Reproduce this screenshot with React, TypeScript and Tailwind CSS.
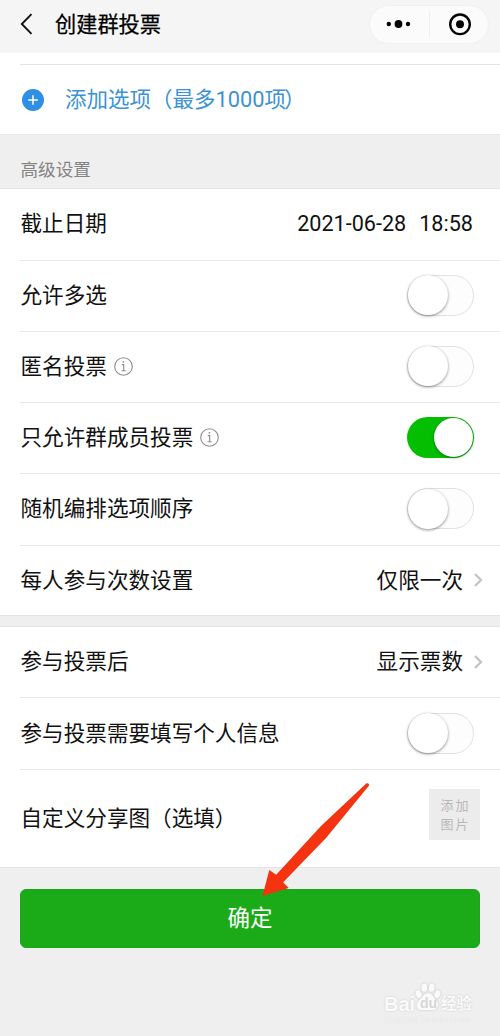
import type { ReactNode } from "react";

function Toggle({ on = false }: { on?: boolean }) {
  return (
    <span
      role="switch"
      aria-checked={on}
      className={
        on
          ? "-mt-px flex h-[41px] w-[67px] items-center justify-end rounded-full bg-[#04be02] p-px"
          : "-mt-px flex h-[41px] w-[67px] items-center justify-start rounded-full border border-[#e1e1e1] bg-[#fdfdfd]"
      }
    >
      <span
        className={
          on
            ? "size-[39px] rounded-full bg-white shadow-[0_1px_3px_rgba(0,0,0,0.4)]"
            : "size-[40px] rounded-full bg-white shadow-[0_1px_3px_rgba(0,0,0,0.45)]"
        }
      />
    </span>
  );
}

function Info() {
  return (
    <svg className="-mt-px ml-[7px] size-[19px]" viewBox="0 0 19 19" fill="none" stroke="#8c8c8c">
      <circle cx="9.5" cy="9.5" r="8.8" strokeWidth="1.1" />
      <path d="M7.8 7.6h1.9v6.1M7.6 13.8h4" strokeWidth="1.1" />
      <circle cx="9.4" cy="4.8" r="0.9" fill="#8c8c8c" stroke="none" />
    </svg>
  );
}

function Chevron() {
  return (
    <svg className="-mt-px ml-[11px] h-[14px] w-[9px]" viewBox="0 0 9 14" fill="none" stroke="#c4c4c4" strokeWidth="2.3">
      <path d="M1 1l6 6-6 6" />
    </svg>
  );
}

function Row({ label, info, children, size }: { label: string; info?: boolean; children: ReactNode; size: string }) {
  return (
    <div className={`ml-5 flex items-center justify-between ${size}`}>
      <div className="flex items-center pl-[0.5px]">
        <span>{label}</span>
        {info && <Info />}
      </div>
      <div className="flex items-center">{children}</div>
    </div>
  );
}

export default function App() {
  return (
    <main className="relative flex h-[1036px] w-[500px] flex-col overflow-hidden bg-[#efefef] font-['Roboto','Noto_Sans_CJK_SC',sans-serif] text-[21.6px] leading-[30px] whitespace-nowrap text-[#111]">
      <header className="flex h-[53px] items-center bg-[#f5f5f5] pr-[11px] pb-[5px] pl-5">
        <svg className="h-[22px] w-[13px]" viewBox="0 0 13 22" fill="none" stroke="#111" strokeWidth="1.9">
          <path d="M11.5 1.2L1.8 11l9.7 9.8" />
        </svg>
        <h1 className="mt-[2px] ml-[22px] text-[21.2px] font-normal text-black [-webkit-text-stroke:0.25px_#000]">创建群投票</h1>
        <div className="ml-auto flex h-[39px] w-[120px] items-center rounded-full border border-[#f0f0f0] bg-[#fbfbfb]">
          <svg className="h-[37px] w-[118px]" viewBox="0 0 118 37">
            <g fill="#050505">
              <circle cx="18.8" cy="18" r="2.2" />
              <circle cx="28.5" cy="18" r="3.9" />
              <circle cx="38" cy="18" r="2.2" />
              <circle cx="90" cy="18.3" r="4" />
            </g>
            <circle cx="90" cy="18.3" r="9.8" fill="none" stroke="#050505" strokeWidth="2.4" />
            <path d="M59.5 5v27" stroke="#efefef" />
          </svg>
        </div>
      </header>

      <section className="flex h-[82px] flex-col border-b border-[#e6e6e6] bg-white pt-[11px]">
        <div className="ml-5 flex flex-1 items-center border-t border-[#e3e3e3] pl-[2px] text-[#3c93d2]">
          <svg className="size-[22px]" viewBox="0 0 22 22">
            <circle cx="11" cy="11" r="11" fill="#2f8fe5" />
            <path d="M6.2 11h9.6M11 6.2v9.6" stroke="white" strokeWidth="1.5" />
          </svg>
          <span className="ml-[21px] text-[21.5px]">
            添加选项（最多<span className="text-[21.8px]">1000</span>项<span className="-ml-[2px]">）</span>
          </span>
        </div>
      </section>

      <h2 className="flex h-[54px] items-center border-b border-[#e4e4e4] pt-[17px] pl-[20.5px] text-[17.6px] text-[#858585]">高级设置</h2>

      <section className="bg-white">
        <Row label="截止日期" size="h-[72px] pb-[2px] border-b border-[#e8e8e8] pr-[27px]">
          <span>2021-06-28</span>
          <span className="ml-[13px]">18:58</span>
        </Row>
        <Row label="允许多选" size="h-[71px] pb-px border-b border-[#e8e8e8] pr-[26px]"><Toggle /></Row>
        <Row label="匿名投票" info size="h-[71px] pb-px border-b border-[#e8e8e8] pr-[26px]"><Toggle /></Row>
        <Row label="只允许群成员投票" info size="h-[71px] border-b border-[#e8e8e8] pr-[26px]"><Toggle on /></Row>
        <Row label="随机编排选项顺序" size="h-[72px] pb-px border-b border-[#e8e8e8] pr-[26px]"><Toggle /></Row>
        <Row label="每人参与次数设置" size="h-[69px] pr-[17px]"><span>仅限一次</span><Chevron /></Row>
      </section>

      <div className="h-[12px] border-y border-[#e4e4e4] bg-[#efefef]" />

      <section className="border-b border-[#e3e3e3] bg-white">
        <Row label="参与投票后" size="h-[71px] border-b border-[#e8e8e8] pr-[17px]"><span>显示票数</span><Chevron /></Row>
        <Row label="参与投票需要填写个人信息" size="h-[72px] border-b border-[#e8e8e8] pr-[26px]"><Toggle /></Row>
        <Row label="自定义分享图（选填）" size="h-[97px] pr-[20px]">
          <span className="mb-[8px] flex size-[51px] items-center justify-center bg-[#ececec] pl-[2px] text-center text-[13px] leading-[19px] tracking-[2px] text-[#b8b8b8]">
            添加<br />图片
          </span>
        </Row>
      </section>

      <button type="button" className="mx-5 mt-[21px] flex h-[59px] items-center justify-center rounded-[6px] border border-[#1da41c] bg-[#1bab19] pb-px text-[22.5px] text-white">确定</button>

      <svg className="absolute top-[780px] left-[260px] h-[120px] w-[115px]" viewBox="0 0 115 120">
        <path d="M106.5 3.3q2.5-.6 2.8 2L66 58 23.2 102.2 28.7 108 2.5 116 9.3 90 16.2 94.7 61 46Z" fill="#f43310" />
      </svg>

      <div className="absolute top-[983px] left-[383px] h-[46px] w-[93px] font-['Liberation_Sans','Noto_Sans_CJK_SC',sans-serif] text-[#fafafa] [text-shadow:0_0_2px_#c8c8c8]">
        <div className="absolute top-[11px] left-[1px] text-[20px] leading-[20px] font-bold">Bai</div>
        <svg className="absolute top-0 left-[31px] h-[28px] w-[28px] overflow-visible drop-shadow-[0_0_1px_#c4c4c4]" viewBox="0 0 28 30" fill="#fafafa">
          <ellipse cx="4" cy="12" rx="3" ry="4.2" transform="rotate(-18 4 12)" />
          <ellipse cx="10" cy="5" rx="3" ry="4.4" />
          <ellipse cx="18" cy="5" rx="3" ry="4.4" transform="rotate(12 18 5)" />
          <ellipse cx="24" cy="12" rx="3" ry="4.2" transform="rotate(18 24 12)" />
          <path d="M14 11c5 0 6 5 9 8 4 5 1 10-4 10H8c-6 0-8-5-4-10 4-3 5-8 10-8Z" />
        </svg>
        <div className="absolute top-[13px] left-[37px] text-[14px] leading-[14px] font-bold text-[#d6d6d6] [text-shadow:none]">du</div>
        <div className="absolute top-[11px] left-[58px] text-[15.5px] leading-[20px] font-bold">经验</div>
        <div className="absolute top-[30px] left-[2px] text-[10.5px] leading-[13px] text-[#f5f5f5] [text-shadow:0_0_1px_#d4d4d4]">jingyan.baidu.com</div>
      </div>
    </main>
  );
}
